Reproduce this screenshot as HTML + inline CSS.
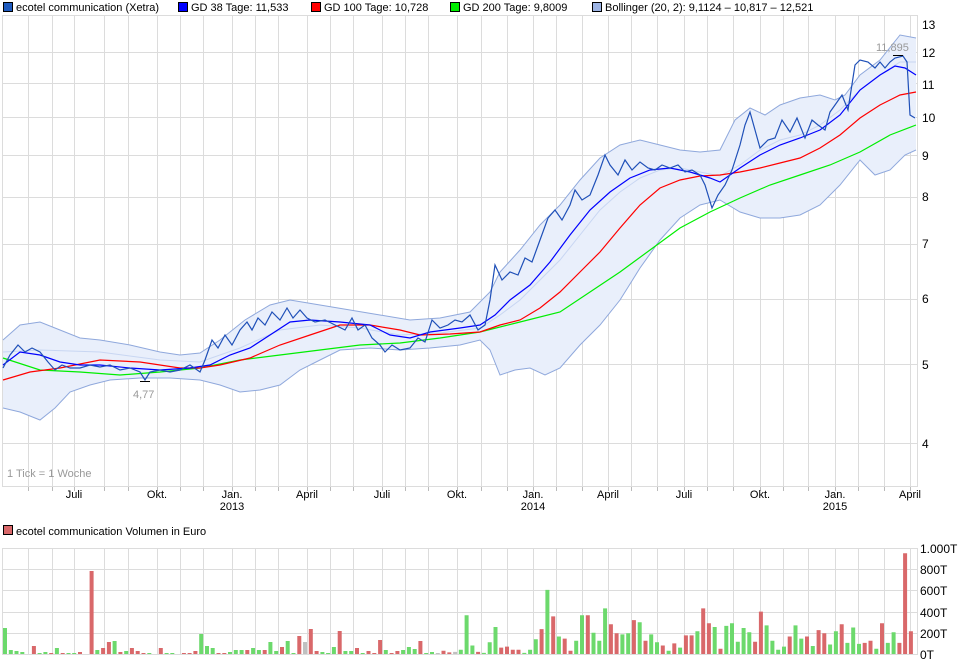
<!DOCTYPE html>
<html><head><meta charset="utf-8"><style>
body{margin:0;background:#fff;width:968px;height:666px;overflow:hidden}
svg{display:block;font-family:"Liberation Sans",Arial,sans-serif;font-size:11px}
</style></head><body>
<svg width="968" height="666" viewBox="0 0 968 666">
<rect width="968" height="666" fill="#fff"/>
<!-- legend -->
<g stroke="#000" stroke-width="1">
<rect x="3.5" y="2.5" width="9" height="9" fill="#1f5bbf"/>
<rect x="178.5" y="2.5" width="9" height="9" fill="#0000ff"/>
<rect x="311.5" y="2.5" width="9" height="9" fill="#ff0000"/>
<rect x="450.5" y="2.5" width="9" height="9" fill="#00ee00"/>
<rect x="592.5" y="2.5" width="9" height="9" fill="#9db4e4"/>
<rect x="3.5" y="525.5" width="9" height="9" fill="#d9686a"/>
</g>
<g fill="#000">
<text x="16" y="11">ecotel communication (Xetra)</text>
<text x="191" y="11">GD 38 Tage: 11,533</text>
<text x="324" y="11">GD 100 Tage: 10,728</text>
<text x="463" y="11">GD 200 Tage: 9,8009</text>
<text x="605" y="11">Bollinger (20, 2): 9,1124 – 10,817 – 12,521</text>
<text x="16" y="535">ecotel communication Volumen in Euro</text>
</g>
<!-- grids -->
<g stroke="#dcdcdc" stroke-width="1" fill="none">
<path d="M28.5 15V487M52.5 15V487M74.5 15V487M104.5 15V487M128.5 15V487M157.5 15V487M180.5 15V487M203.5 15V487M232.5 15V487M255.5 15V487M278.5 15V487M307.5 15V487M330.5 15V487M353.5 15V487M382.5 15V487M405.5 15V487M428.5 15V487M457.5 15V487M481.5 15V487M507.5 15V487M533.5 15V487M556.5 15V487M582.5 15V487M608.5 15V487M631.5 15V487M657.5 15V487M684.5 15V487M707.5 15V487M733.5 15V487M760.5 15V487M783.5 15V487M808.5 15V487M835.5 15V487M858.5 15V487M884.5 15V487M910.5 15V487"/>
<path d="M2 52.5H918M2 83.5H918M2 117.5H918M2 155.5H918M2 197.5H918M2 244.5H918M2 299.5H918M2 364.5H918M2 443.5H918"/>
<rect x="2.5" y="15.5" width="915" height="471"/>
<path d="M28.5 548V654M52.5 548V654M74.5 548V654M104.5 548V654M128.5 548V654M157.5 548V654M180.5 548V654M203.5 548V654M232.5 548V654M255.5 548V654M278.5 548V654M307.5 548V654M330.5 548V654M353.5 548V654M382.5 548V654M405.5 548V654M428.5 548V654M457.5 548V654M481.5 548V654M507.5 548V654M533.5 548V654M556.5 548V654M582.5 548V654M608.5 548V654M631.5 548V654M657.5 548V654M684.5 548V654M707.5 548V654M733.5 548V654M760.5 548V654M783.5 548V654M808.5 548V654M835.5 548V654M858.5 548V654M884.5 548V654M910.5 548V654"/>
<path d="M2 569.5H918M2 590.5H918M2 612.5H918M2 633.5H918"/>
<path d="M2 548.5H918M2 654.5H918M2.5 548V654M917.5 548V654"/>
<path d="M28.5 487v4M52.5 487v4M74.5 487v4M104.5 487v4M128.5 487v4M157.5 487v4M180.5 487v4M203.5 487v4M232.5 487v4M255.5 487v4M278.5 487v4M307.5 487v4M330.5 487v4M353.5 487v4M382.5 487v4M405.5 487v4M428.5 487v4M457.5 487v4M481.5 487v4M507.5 487v4M533.5 487v4M556.5 487v4M582.5 487v4M608.5 487v4M631.5 487v4M657.5 487v4M684.5 487v4M707.5 487v4M733.5 487v4M760.5 487v4M783.5 487v4M808.5 487v4M835.5 487v4M858.5 487v4M884.5 487v4M910.5 487v4" stroke="#bbb"/>
</g>
<!-- bollinger band -->
<polygon fill="#e9effb" stroke="none" points="3,340 20,325 40,322 60,330 80,338 100,340 130,345 160,352 180,355 200,353 220,340 245,320 270,305 290,300 320,305 350,310 380,315 410,320 440,318 470,312 490,292 500,272 520,250 540,225 560,205 580,180 600,158 620,145 640,140 660,145 680,150 700,152 720,150 735,120 750,108 765,115 780,105 800,98 820,95 835,100 845,95 860,75 880,60 900,35 916,38 916,150 905,155 890,170 875,175 860,160 840,185 820,205 800,215 780,218 760,218 740,212 720,200 700,205 680,218 660,240 640,268 620,300 600,325 580,345 560,368 545,375 530,368 515,370 500,375 490,350 480,340 460,345 430,348 400,350 370,348 340,350 320,360 300,370 280,385 260,390 240,392 220,385 200,380 170,378 140,378 110,380 90,385 70,392 55,408 40,420 20,412 3,408"/>
<g fill="none" stroke="#8fa8dc" stroke-width="1">
<polyline points="3,340 20,325 40,322 60,330 80,338 100,340 130,345 160,352 180,355 200,353 220,340 245,320 270,305 290,300 320,305 350,310 380,315 410,320 440,318 470,312 490,292 500,272 520,250 540,225 560,205 580,180 600,158 620,145 640,140 660,145 680,150 700,152 720,150 735,120 750,108 765,115 780,105 800,98 820,95 835,100 845,95 860,75 880,60 900,35 916,38"/>
<polyline points="3,408 20,412 40,420 55,408 70,392 90,385 110,380 140,378 170,378 200,380 220,385 240,392 260,390 280,385 300,370 320,360 340,350 370,348 400,350 430,348 460,345 480,340 490,350 500,375 515,370 530,368 545,375 560,368 580,345 600,325 620,300 640,268 660,240 680,218 700,205 720,200 740,212 760,218 780,218 800,215 820,205 840,185 860,160 875,175 890,170 905,155 916,150"/>
<polyline stroke="#c8d6f2" points="3,352 40,350 100,352 160,360 200,362 240,348 280,330 320,325 360,328 400,335 440,333 480,328 500,315 520,300 540,280 560,260 580,235 600,210 620,192 640,178 660,170 680,168 700,172 720,176 740,165 760,150 780,140 800,135 820,125 840,110 860,90 880,75 900,62 916,62"/>
</g>
<!-- moving averages -->
<polyline fill="none" stroke="#00ee00" stroke-width="1.2" points="3,358 40,370 80,372 120,375 160,372 200,368 240,360 280,355 320,350 360,345 400,343 440,338 480,332 520,322 560,312 590,292 620,272 650,250 680,228 710,212 740,198 770,185 800,175 830,165 860,152 890,135 916,125"/>
<polyline fill="none" stroke="#ff0000" stroke-width="1.2" points="3,380 30,372 60,368 100,360 140,362 180,368 200,368 220,365 250,358 280,345 310,335 340,325 370,325 400,330 420,335 450,334 480,332 500,325 520,320 540,308 560,292 580,272 600,252 620,228 640,205 660,188 680,180 700,176 720,175 740,172 760,168 780,163 800,158 820,148 840,135 860,118 880,105 900,95 916,92"/>
<polyline fill="none" stroke="#0000ff" stroke-width="1.2" points="3,365 20,352 40,355 60,362 80,365 100,365 130,368 160,370 190,368 210,365 230,355 250,348 270,335 290,322 310,320 340,322 370,325 390,335 410,338 430,332 460,328 480,325 495,315 510,300 530,285 550,262 570,235 590,210 610,192 630,178 650,170 670,168 690,172 710,178 720,182 740,168 760,155 780,145 800,138 820,130 840,115 860,90 880,75 895,66 905,68 916,75"/>
<polyline fill="none" stroke="#1f50b8" stroke-width="1.2" points="3,368 10,355 18,345 25,352 32,348 40,352 48,362 55,370 62,365 70,368 80,368 90,365 100,367 110,365 120,370 130,368 140,372 145,380 150,372 160,370 170,372 180,370 190,365 200,372 205,360 212,340 218,348 225,335 232,345 240,330 247,322 252,330 258,318 265,325 272,312 280,320 287,308 293,318 300,310 307,318 315,322 325,320 335,325 345,330 352,318 358,330 365,325 372,338 380,345 385,352 392,345 400,350 410,348 418,338 425,342 432,320 440,328 448,325 455,320 462,322 470,315 478,330 485,325 490,300 495,265 502,280 510,272 518,275 525,258 532,262 540,240 548,218 555,210 562,220 570,205 575,190 582,200 590,195 598,175 605,155 610,165 618,175 625,160 632,170 640,162 648,168 655,170 662,165 670,168 678,165 685,172 692,170 700,175 705,185 712,208 718,195 725,185 732,170 740,145 745,125 750,112 755,130 760,148 768,140 775,138 782,120 790,132 797,118 805,138 812,120 818,125 825,130 830,112 835,105 842,95 848,110 855,65 860,60 868,62 875,68 880,62 885,68 890,62 895,58 903,56 907,62 910,115 915,118"/>
<path d="M140 381.5h10M893 55.5h10" stroke="#000" stroke-width="1"/>
<g fill="#999">
<text x="133" y="398">4,77</text>
<text x="876" y="51">11,895</text>
<text x="7" y="477">1 Tick = 1 Woche</text>
</g>
<!-- axis labels -->
<g fill="#000" text-anchor="middle">
<text x="74" y="498">Juli</text><text x="157" y="498">Okt.</text><text x="232" y="498">Jan.</text><text x="232" y="510">2013</text>
<text x="307" y="498">April</text><text x="382" y="498">Juli</text><text x="457" y="498">Okt.</text><text x="533" y="498">Jan.</text><text x="533" y="510">2014</text>
<text x="608" y="498">April</text><text x="684" y="498">Juli</text><text x="760" y="498">Okt.</text><text x="835" y="498">Jan.</text><text x="835" y="510">2015</text><text x="910" y="498">April</text>
</g>
<g fill="#000" font-size="12">
<text x="922" y="29">13</text><text x="922" y="57">12</text><text x="922" y="89">11</text><text x="922" y="122">10</text>
<text x="922" y="160">9</text><text x="922" y="201">8</text><text x="922" y="248">7</text><text x="922" y="303">6</text>
<text x="922" y="369">5</text><text x="922" y="448">4</text>
<text x="920" y="553">1.000T</text><text x="920" y="574">800T</text><text x="920" y="595">600T</text><text x="920" y="617">400T</text><text x="920" y="638">200T</text><text x="920" y="659">0T</text>
</g>
<!-- volume bars -->
<path fill="#6cd96c" d="M3,654v-26h4v26zM8.8,654v-4h4v4zM14.5,654v-3h4v3zM20.3,654v-2h4v2zM37.6,654v-1h4v1zM43.4,654v-2h4v2zM54.9,654v-6h4v6zM66.5,654v-1h4v1zM72.2,654v-1h4v1zM95.3,654v-4h4v4zM112.6,654v-13h4v13zM124.2,654v-3h4v3zM147.3,654v-1h4v1zM164.6,654v-1h4v1zM170.3,654v-1h4v1zM199.2,654v-20h4v20zM205,654v-8h4v8zM210.7,654v-6h4v6zM228,654v-2h4v2zM233.8,654v-4h4v4zM239.6,654v-4h4v4zM251.1,654v-6h4v6zM256.9,654v-4h4v4zM268.4,654v-12h4v12zM274.2,654v-3h4v3zM285.7,654v-13h4v13zM291.5,654v-1h4v1zM320.4,654v-2h4v2zM326.1,654v-1h4v1zM331.9,654v-7h4v7zM343.4,654v-3h4v3zM349.2,654v-3h4v3zM360.7,654v-1h4v1zM383.8,654v-4h4v4zM401.1,654v-4h4v4zM406.9,654v-7h4v7zM412.7,654v-5h4v5zM424.2,654v-1h4v1zM430,654v-2h4v2zM458.8,654v-4.2h4v4.2zM464.6,654v-38.7h4v38.7zM470.4,654v-8.5h4v8.5zM481.9,654v-1.1h4v1.1zM487.7,654v-11.7h4v11.7zM493.5,654v-27h4v27zM522.3,654v-1.1h4v1.1zM528.1,654v-4.2h4v4.2zM533.8,654v-14.8h4v14.8zM545.4,654v-64.1h4v64.1zM556.9,654v-17.5h4v17.5zM574.2,654v-13.3h4v13.3zM580,654v-38.7h4v38.7zM591.5,654v-21.2h4v21.2zM597.3,654v-13.3h4v13.3zM603.1,654v-45.6h4v45.6zM620.4,654v-19.6h4v19.6zM626.2,654v-20.7h4v20.7zM637.7,654v-31.8h4v31.8zM649.2,654v-19.6h4v19.6zM655,654v-11.7h4v11.7zM666.6,654v-3.2h4v3.2zM678.1,654v-6.4h4v6.4zM695.4,654v-22.8h4v22.8zM712.7,654v-27h4v27zM724.3,654v-28.1h4v28.1zM730,654v-30.7h4v30.7zM735.8,654v-12.2h4v12.2zM741.6,654v-26h4v26zM747.3,654v-21.7h4v21.7zM764.6,654v-28.6h4v28.6zM770.4,654v-13.3h4v13.3zM776.2,654v-4.2h4v4.2zM782,654v-7.4h4v7.4zM793.5,654v-28.6h4v28.6zM799.3,654v-15.4h4v15.4zM810.8,654v-8h4v8zM828.1,654v-9.5h4v9.5zM833.9,654v-22.8h4v22.8zM845.4,654v-11.1h4v11.1zM851.2,654v-26.5h4v26.5zM857,654v-10.1h4v10.1zM874.3,654v-5.3h4v5.3zM885.8,654v-11.1h4v11.1zM891.6,654v-21.7h4v21.7z"/>
<path fill="#d9686a" d="M31.9,654v-8h4v8zM49.2,654v-1h4v1zM60.7,654v-1h4v1zM78,654v-2h4v2zM89.6,654v-83h4v83zM101.1,654v-6h4v6zM106.9,654v-12h4v12zM118.4,654v-2h4v2zM129.9,654v-6h4v6zM135.7,654v-3h4v3zM141.5,654v-1h4v1zM158.8,654v-6h4v6zM181.9,654v-1h4v1zM187.6,654v-1h4v1zM193.4,654v-3h4v3zM216.5,654v-1h4v1zM222.3,654v-1h4v1zM245.3,654v-4h4v4zM262.7,654v-4h4v4zM280,654v-7h4v7zM297.3,654v-18h4v18zM308.8,654v-25h4v25zM314.6,654v-3h4v3zM337.7,654v-23h4v23zM355,654v-6h4v6zM366.5,654v-3h4v3zM372.3,654v-1h4v1zM378.1,654v-14h4v14zM389.6,654v-1h4v1zM395.4,654v-3h4v3zM418.4,654v-13h4v13zM441.5,654v-3.2h4v3.2zM447.3,654v-1.6h4v1.6zM476.1,654v-2.1h4v2.1zM499.2,654v-6.4h4v6.4zM505,654v-7.4h4v7.4zM510.8,654v-4.2h4v4.2zM516.5,654v-4.2h4v4.2zM539.6,654v-24.9h4v24.9zM551.2,654v-37.6h4v37.6zM562.7,654v-15.4h4v15.4zM568.5,654v-3.2h4v3.2zM585.8,654v-38.7h4v38.7zM608.9,654v-29.7h4v29.7zM614.6,654v-20.7h4v20.7zM631.9,654v-33.9h4v33.9zM643.5,654v-13.3h4v13.3zM660.8,654v-8.5h4v8.5zM672.3,654v-10.6h4v10.6zM683.9,654v-18.6h4v18.6zM689.6,654v-18.6h4v18.6zM701.2,654v-45.6h4v45.6zM706.9,654v-30.7h4v30.7zM718.5,654v-5.3h4v5.3zM753.1,654v-12.2h4v12.2zM758.9,654v-42.4h4v42.4zM787.7,654v-17.5h4v17.5zM805,654v-17.5h4v17.5zM816.6,654v-23.9h4v23.9zM822.3,654v-20.7h4v20.7zM839.7,654v-29.7h4v29.7zM862.7,654v-11.1h4v11.1zM868.5,654v-13.3h4v13.3zM880,654v-30.7h4v30.7zM897.4,654v-11.1h4v11.1zM903.1,654v-100.7h4v100.7zM908.9,654v-22.8h4v22.8z"/>
<path fill="#c0c0c0" d="M303,654v-12h4v12zM435.8,654v-1h4v1zM453.1,654v-2.1h4v2.1z"/>
</svg>
</body></html>
